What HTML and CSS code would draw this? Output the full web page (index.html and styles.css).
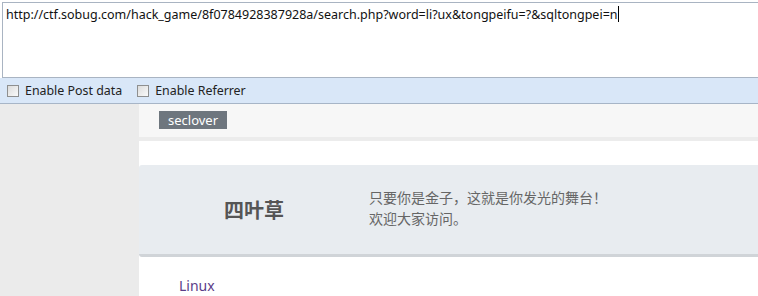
FILE: index.html
```html
<!DOCTYPE html>
<html>
<head>
<meta charset="utf-8">
<link rel="stylesheet" href="styles.css">
</head>
<body>
<div class="hackbar">
  <div class="url-box"><span class="url-text">http://ctf.sobug.com/hack_game/8f0784928387928a/search.php?word=li?ux&amp;tongpeifu=?&amp;sqltongpei=n</span><span class="caret"></span></div>
  <div class="toolbar">
    <label class="opt"><span class="box"></span>Enable Post data</label>
    <label class="opt"><span class="box"></span>Enable Referrer</label>
  </div>
</div>
<div class="page">
  <div class="sidebar"></div>
  <div class="main">
    <div class="navbar"><span class="badge">seclover</span></div>
    <div class="spacer"></div>
    <div class="jumbo">
      <div class="brand">四叶草</div>
      <div class="slogan">只要你是金子，这就是你发光的舞台！<br>欢迎大家访问。</div>
    </div>
    <div class="content"><a class="link" href="#">Linux</a></div>
  </div>
</div>
</body>
</html>
```

FILE: styles.css
```css
* { box-sizing: border-box; }
html, body { margin: 0; padding: 0; }
body {
  width: 758px; height: 296px; overflow: hidden;
  font-family: "Noto Sans", "Noto Sans CJK SC", sans-serif;
  background: #fff;
}
.hackbar { display: flex; flex-direction: column; }
.url-box {
  height: 76px;
  margin: 2px 0 0 2px;
  border: 1px solid #a9b4c2;
  border-right: none;
  background: #fff;
  padding: 3px 0 0 3px;
  font-size: 12.5px;
  line-height: 17px;
  color: #111;
  display: flex;
  align-items: flex-start;
}
.caret { display: inline-block; width: 1px; height: 16px; background: #000; }
.toolbar {
  height: 26px;
  background: #d9e7f8;
  border-bottom: 1px solid #a7b5c7;
  display: flex;
  align-items: center;
  padding-left: 7px;
  gap: 15px;
  font-size: 12.4px;
  color: #222;
}
.opt { display: flex; align-items: center; gap: 6px; }
.box {
  width: 12px; height: 12px;
  border: 1px solid #8e8f8f;
  background: linear-gradient(135deg, #dcdcdc, #fafafa);
}
.page { display: flex; height: 200px; }
.sidebar { width: 139px; background: #ebebeb; }
.main { flex: 1; display: flex; flex-direction: column; background: #fff; }
.navbar {
  height: 37px;
  background: #f7f7f7;
  border-bottom: 4px solid #ececec;
  padding: 7px 0 0 20px;
  display: flex;
  align-items: flex-start;
}
.badge {
  display: block;
  background: #6e767e;
  color: #fff;
  font-size: 13px;
  line-height: 18px;
  padding: 0 9px;
}
.spacer { height: 24px; }
.jumbo {
  height: 92px;
  background: #e8ecf0;
  border-bottom: 3px solid #d0d4d8;
  border-top-left-radius: 3px;
  border-bottom-left-radius: 3px;
  display: flex;
  align-items: center;
}
.brand {
  width: 230px;
  padding-left: 85px;
  font-size: 20px;
  font-weight: bold;
  color: #555;
  font-family: "Noto Sans CJK SC", sans-serif;
}
.slogan {
  font-size: 14px;
  line-height: 21px;
  color: #666;
  font-family: "Noto Sans CJK SC", sans-serif;
  margin-top: -3px;
}
.content { padding: 17px 0 0 40px; }
.link { color: #5b3c88; text-decoration: none; font-size: 14px; }
```
